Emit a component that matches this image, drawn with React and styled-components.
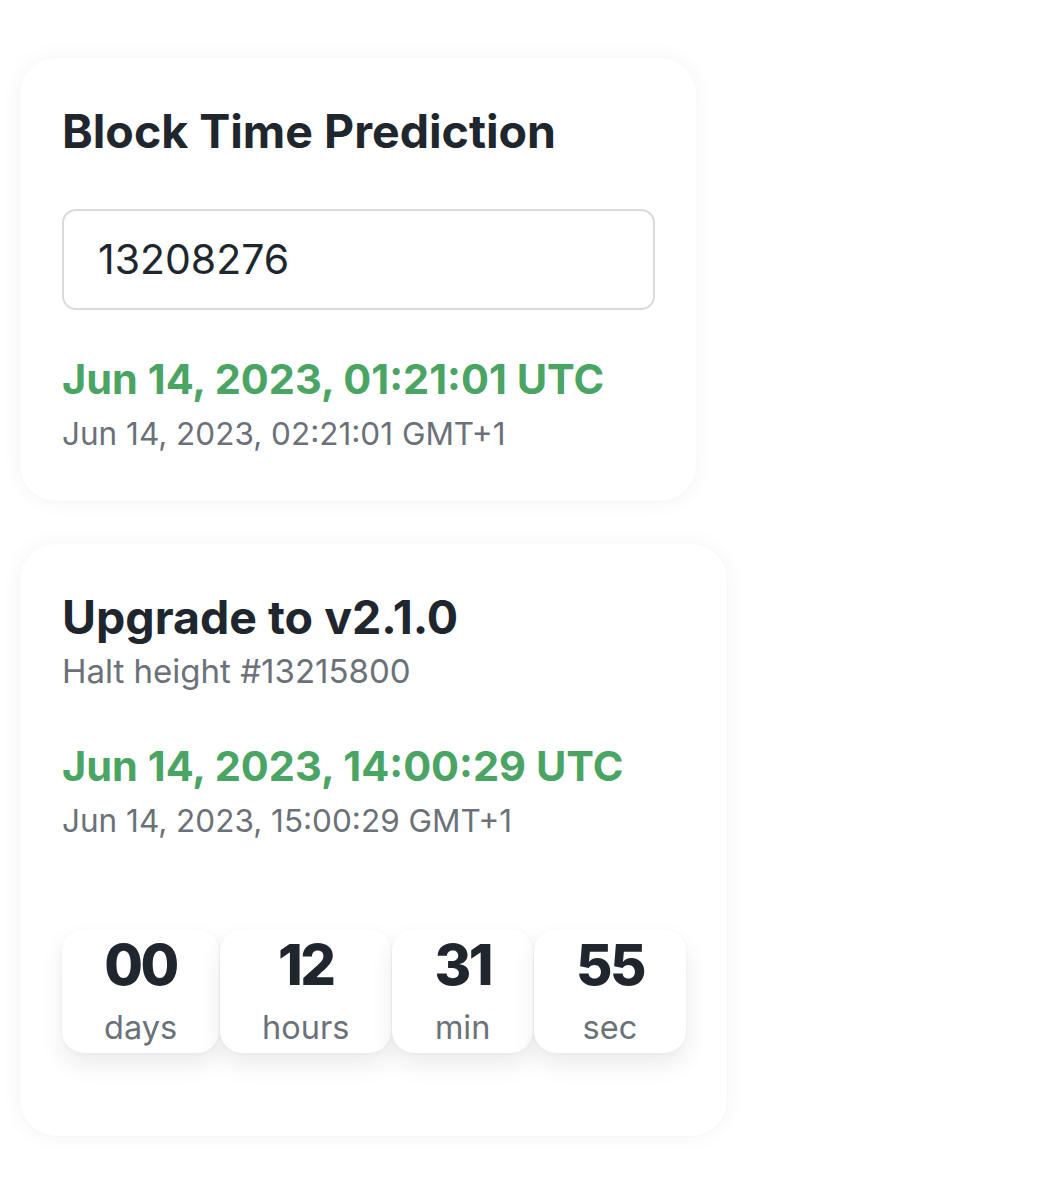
import React, { useState } from 'react';
import styled, { createGlobalStyle } from 'styled-components';

const GlobalStyle = createGlobalStyle`
  html, body {
    margin: 0;
    padding: 0;
    background: #ffffff;
  }
  body {
    font-family: Inter, 'Noto Sans', sans-serif;
    color: #20262e;
  }
`;

const Page = styled.div`
  display: flex;
  flex-direction: column;
  align-items: flex-start;
  gap: 43px;
  padding: 58px 20px 60px;
`;

const Card = styled.section`
  display: flex;
  flex-direction: column;
  align-items: flex-start;
  background: #fff;
  border-radius: 36px;
  padding: 46px 41px ${(p) => p.$bottom}px 42px;
  box-shadow: 0 0 22px rgba(0, 0, 0, 0.05), 0 1px 3px rgba(0, 0, 0, 0.02);
`;

const Title = styled.h2`
  margin: 0;
  font-size: 46.5px;
  font-weight: 700;
  line-height: 1.2;
  color: #20262e;
`;

const SubTitle = styled.div`
  font-size: 33px;
  line-height: 1.3;
  color: #6b7179;
  margin-top: 5px;
`;

const BlockInput = styled.input`
  box-sizing: border-box;
  width: 593px;
  height: 101px;
  margin-top: 49px;
  padding: 0 34px;
  border: 2px solid #dadada;
  border-radius: 14px;
  font-family: inherit;
  font-size: 41px;
  color: #20262e;
  background: #fff;
  outline: none;
`;

const DateBlock = styled.div`
  display: flex;
  flex-direction: column;
  gap: 7px;
  margin-top: ${(p) => p.$top}px;
`;

const UtcLine = styled.div`
  font-size: 41.5px;
  font-weight: 700;
  line-height: 1.3;
  color: #4aa463;
`;

const LocalLine = styled.div`
  font-size: 31.5px;
  line-height: 1.3;
  color: #6b7179;
`;

const Countdown = styled.div`
  display: flex;
  gap: 1px;
  margin-top: 87px;
`;

const Unit = styled.div`
  display: flex;
  flex-direction: column;
  align-items: center;
  padding: 4px 42px;
  background: #fff;
  border-radius: 22px;
  box-shadow: 0 12px 24px rgba(0, 0, 0, 0.08), 0 1px 4px rgba(0, 0, 0, 0.04);
`;

const UnitValue = styled.div`
  font-size: 56px;
  font-weight: 800;
  line-height: 1.15;
  letter-spacing: -2.5px;
  color: #20262e;
`;

const UnitLabel = styled.div`
  margin-top: 9px;
  font-size: 32.5px;
  line-height: 1.3;
  color: #6b7179;
`;

const countdown = [
  { value: '00', label: 'days' },
  { value: '12', label: 'hours' },
  { value: '31', label: 'min' },
  { value: '55', label: 'sec' },
];

export default function App() {
  const [block, setBlock] = useState('13208276');

  return (
    <>
      <GlobalStyle />
      <Page>
        <Card $bottom={46}>
          <Title>Block Time Prediction</Title>
          <BlockInput value={block} onChange={(e) => setBlock(e.target.value)} />
          <DateBlock $top={43}>
            <UtcLine>Jun 14, 2023, 01:21:01 UTC</UtcLine>
            <LocalLine>Jun 14, 2023, 02:21:01 GMT+1</LocalLine>
          </DateBlock>
        </Card>

        <Card $bottom={83}>
          <Title>Upgrade to v2.1.0</Title>
          <SubTitle>Halt height #13215800</SubTitle>
          <DateBlock $top={47}>
            <UtcLine>Jun 14, 2023, 14:00:29 UTC</UtcLine>
            <LocalLine>Jun 14, 2023, 15:00:29 GMT+1</LocalLine>
          </DateBlock>
          <Countdown>
            {countdown.map((u) => (
              <Unit key={u.label}>
                <UnitValue>{u.value}</UnitValue>
                <UnitLabel>{u.label}</UnitLabel>
              </Unit>
            ))}
          </Countdown>
        </Card>
      </Page>
    </>
  );
}
